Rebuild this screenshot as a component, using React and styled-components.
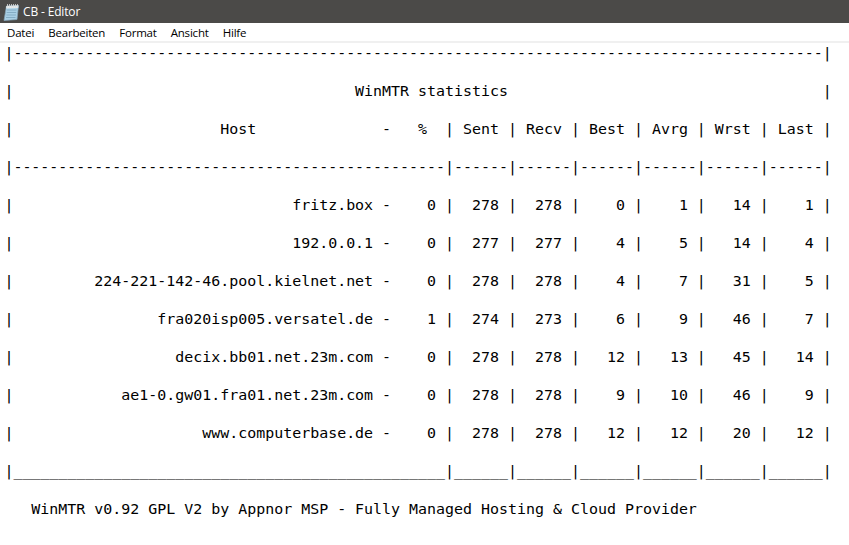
import React from "react";
import styled, { createGlobalStyle } from "styled-components";

const Global = createGlobalStyle`
  html, body { margin: 0; padding: 0; background: #fff; overflow: hidden; }
`;
const Window = styled.div`
  width: 849px; height: 545px; display: flex; flex-direction: column; background: #fff;
`;
const TitleBar = styled.div`
  height: 23px; background: #4b4a48; display: flex; align-items: center; padding-left: 3px; gap: 4px;
  color: #fff; font: 12px "Open Sans", "Noto Sans", sans-serif; letter-spacing: -0.15px; flex: none;
`;
const MenuBar = styled.div`
  height: 18px; background: #fff; display: flex; align-items: center; padding-left: 7px; gap: 14px;
  color: #000; font: 11.5px "Open Sans", "Noto Sans", sans-serif; letter-spacing: -0.2px; flex: none;
`;
const Rule = styled.div`height: 2px; background: #f0f0f0; flex: none;`;
const Editor = styled.div`
  flex: 1; padding: 1px 0 0 4.4px; font-family: "DejaVu Sans Mono", monospace; font-size: 14.95px;
  color: #000;
`;
const Line = styled.div`height: 38px; line-height: 19px; white-space: pre;`;

const Notepad = () => (
  <svg width="16" height="18" viewBox="0 0 16 18">
    <path d="M3.5 3 L15.5 2.5 L14 16.5 L1 17.5 Z" fill="#a9cfe4" stroke="#86a6ba" strokeWidth=".7" />
    <path d="M4 7h9.5M3.7 9.5h9.5M3.4 12h9.5M3 14.5h9.5" stroke="#7ba3bb" strokeWidth=".8" />
    <path d="M3.4 3 L15.4 2.5 L15.2 5 L3.1 5.5 Z" fill="#e4e9ea" />
    <path d="M4.5 1v3.5M6.5 1v3.5M8.5 1v3.5M10.5 1v3.5M12.5 1v3.5M14.5 1v3.5" stroke="#dcdcdc" strokeWidth=".8" />
  </svg>
);

const hosts = [
  ["fritz.box", 0, 278, 278, 0, 1, 14, 1],
  ["192.0.0.1", 0, 277, 277, 4, 5, 14, 4],
  ["224-221-142-46.pool.kielnet.net", 0, 278, 278, 4, 7, 31, 5],
  ["fra020isp005.versatel.de", 1, 274, 273, 6, 9, 46, 7],
  ["decix.bb01.net.23m.com", 0, 278, 278, 12, 13, 45, 14],
  ["ae1-0.gw01.fra01.net.23m.com", 0, 278, 278, 9, 10, 46, 9],
  ["www.computerbase.de", 0, 278, 278, 12, 12, 20, 12],
];
const cell = (v) => String(v).padStart(5) + " |";
const rowText = ([h, p, ...rest]) =>
  "|" + h.padStart(40) + " -    " + p + " |" + rest.map(cell).join("");
const sep = (c) => "|" + c.repeat(48) + "|" + (c.repeat(6) + "|").repeat(6);

const lines = [
  "|" + "-".repeat(90) + "|",
  "|" + " ".repeat(38) + "WinMTR statistics" + " ".repeat(35) + "|",
  "|" + " ".repeat(23) + "Host" + " ".repeat(14) + "-   %  |" +
    [" Sent ", " Recv ", " Best ", " Avrg ", " Wrst ", " Last "].map((t) => t + "|").join(""),
  sep("-"),
  ...hosts.map(rowText),
  sep("_"),
  "   WinMTR v0.92 GPL V2 by Appnor MSP - Fully Managed Hosting & Cloud Provider",
];

export default function App() {
  return (
    <Window>
      <Global />
      <TitleBar><Notepad /><span>CB - Editor</span></TitleBar>
      <MenuBar>
        {["Datei", "Bearbeiten", "Format", "Ansicht", "Hilfe"].map((m) => <span key={m}>{m}</span>)}
      </MenuBar>
      <Rule />
      <Editor>
        {lines.map((l, i) => <Line key={i}>{l}</Line>)}
      </Editor>
    </Window>
  );
}
